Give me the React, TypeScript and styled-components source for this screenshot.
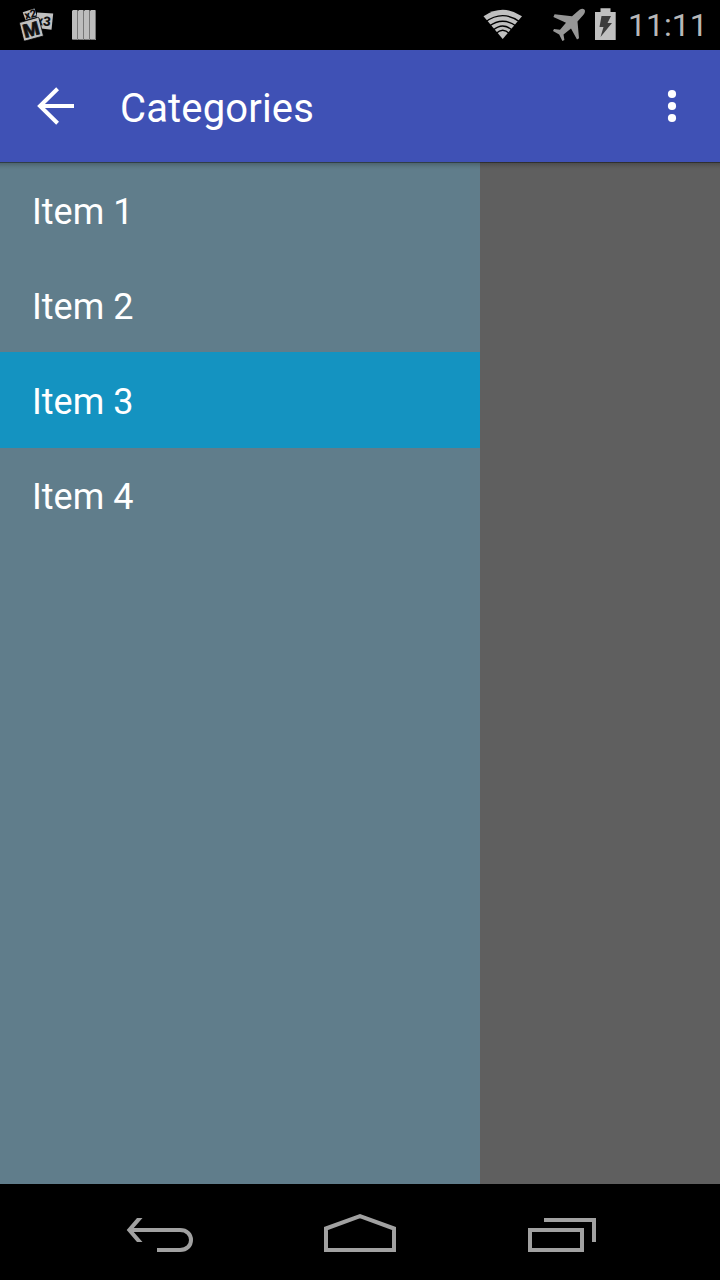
import React from "react";
import styled, { createGlobalStyle } from "styled-components";

const GlobalStyle = createGlobalStyle`
  * { box-sizing: border-box; }
  body { margin: 0; background: #000; }
`;

const Screen = styled.div`
  display: flex;
  flex-direction: column;
  width: 720px;
  height: 1280px;
  overflow: hidden;
  font-family: Roboto, sans-serif;
  background: #000;
`;

const StatusBar = styled.header`
  display: flex;
  justify-content: space-between;
  flex: 0 0 50px;
  height: 50px;
  padding: 0 13px 0 18px;
`;

const StatusGroup = styled.div`
  display: flex;
  align-items: flex-start;
`;

const StatusIcon = styled.svg<{ $gap?: number }>`
  display: block;
  flex: none;
  margin-right: ${({ $gap = 0 }) => $gap}px;
`;

const Clock = styled.time`
  width: 79px;
  height: 50px;
  line-height: 50px;
  font-size: 32px;
  font-weight: 400;
  color: #b8b8b8;
  white-space: nowrap;
`;

const AppBar = styled.div`
  display: flex;
  align-items: center;
  flex: 0 0 112px;
  padding: 0 24px 0 32px;
  background: #3f51b5;
`;

const IconButton = styled.button`
  display: block;
  width: 48px;
  height: 48px;
  padding: 0;
  border: 0;
  background: none;
  color: #fff;

  svg { display: block; }
`;

const Title = styled.h1`
  flex: 1;
  margin: 0;
  padding: 5px 0 0 40px;
  font-size: 40px;
  font-weight: 400;
  letter-spacing: 0.15px;
  line-height: 48px;
  color: #fff;
`;

const Content = styled.main`
  display: flex;
  flex: 1;
  position: relative;
  background: #5f5f5f;

  &::before {
    content: "";
    position: absolute;
    inset: 0 0 auto;
    height: 8px;
    background: linear-gradient(rgba(0, 0, 0, 0.5) 0 1px, rgba(0, 0, 0, 0.2) 1px, rgba(0, 0, 0, 0.05) 5px, transparent);
  }
`;

const Drawer = styled.nav`
  width: 480px;
  background: #607d8b;
`;

const DrawerItem = styled.div<{ $active: boolean }>`
  height: ${({ $active }) => ($active ? 96 : 95)}px;
  margin-bottom: ${({ $active }) => ($active ? -1 : 0)}px;
  padding: 1px 32px 0 32px;
  font-size: 36px;
  line-height: 98px;
  color: #fff;
  background: ${({ $active }) => ($active ? "#1493c1" : "transparent")};
`;

const NavigationBar = styled.footer`
  display: flex;
  justify-content: center;
  gap: 104px;
  flex: 0 0 96px;
`;

const NavButton = styled.button`
  width: 100px;
  height: 96px;
  padding: 0;
  border: 0;
  background: none;
  color: #a1a1a1;

  svg { display: block; }
`;

const items = ["Item 1", "Item 2", "Item 3", "Item 4"];

export default function App() {
  return (
    <Screen>
      <GlobalStyle />
      <StatusBar>
        <StatusGroup>
          <StatusIcon width="38" height="50" viewBox="18 0 38 50" $gap={15}>
            <g fontFamily="Roboto, sans-serif" fontWeight="900" fill="#111">
              <path d="M22.7 12.2 34.5 8.6 37 17 25.5 20Z" fill="#c0c0c0" />
              <text x="24.5" y="18.5" fontSize="11" transform="rotate(-14 29 15)">x2</text>
              <path d="M37 12.6 53.2 13.5 51.5 29.8 37 28Z" fill="#c0c0c0" />
              <text x="36.5" y="25.5" fontSize="13" transform="rotate(6 44 21)">x3</text>
              <path d="M20.5 22.3 37.6 17.4Q38.5 17.2 38.9 18L43.3 35.2Q43.5 36 42.6 36.2L25 41Q24 41.2 23.7 40.3L19.6 23.7Q19.4 22.6 20.5 22.3Z" fill="#c0c0c0" stroke="#000" strokeWidth=".8" />
              <text x="23" y="36" fontSize="18.5" stroke="#111" strokeWidth=".6" transform="rotate(-15 31.5 29.5)">M</text>
            </g>
          </StatusIcon>
          <StatusIcon width="26" height="50" viewBox="71 0 26 50">
            {[72, 78, 84, 90].map((x) => (
              <g key={x}>
                <path d={`M${x} 11 ${x + 1} 10H${x + 5}L${x + 6} 11V40H${x + 1}L${x} 39Z`} fill="#bdbdbd" />
                <path d={`M${x + 5.5} 11V39.5H${x + 1}`} fill="none" stroke="#777" />
              </g>
            ))}
          </StatusIcon>
        </StatusGroup>
        <StatusGroup>
          <StatusIcon width="40" height="50" viewBox="483 0 40 50" $gap={29}>
            <path d="M502.7 39 483.5 16.2Q502.7 3.3 522 16.2Z" fill="#c0c0c0" />
            <g fill="none" stroke="#000" strokeWidth="1.4">
              <path d="M485 22.2Q502.7 9 520.4 22.2" />
              <path d="M489 26.3Q502.7 16.3 516.4 26.3" />
              <path d="M493 30.3Q502.7 21.7 512.4 30.3" />
              <path d="M496 33.6Q502.7 26.8 509.4 33.6" />
            </g>
          </StatusIcon>
          <StatusIcon width="34" height="50" viewBox="552 0 34 50" $gap={8}>
            <path d="M585 11Q585 13 583.5 14.8L577.5 21.5 579 38.3 577 39.6 571 28.5 563.5 34.5 564.4 40 562.4 41 559.2 34.5 553 31 554 29 560 29.8 566 22.8 553.4 17 554.6 14.2 572 16.2 579.5 9.8Q582 8.3 584 9.2Q585 9.8 585 11Z" fill="#969696" />
          </StatusIcon>
          <StatusIcon width="22" height="50" viewBox="594 0 22 50" $gap={12}>
            <path d="M595 12H600.5V8.3H610.5V12H615.7V40H595Z" fill="#c0c0c0" />
            <path d="M601.5 16H611L607.5 23H612L600.5 37L603.5 27H599.5Z" fill="#3c3c3c" />
          </StatusIcon>
          <Clock>11:11</Clock>
        </StatusGroup>
      </StatusBar>

      <AppBar>
        <IconButton aria-label="Back">
          <svg width="48" height="48" viewBox="32 82 48 48" fill="none" stroke="currentColor" strokeWidth="4">
            <path d="M74 106H40M57.6 88.7 40 106 57.6 123.3" />
          </svg>
        </IconButton>
        <Title>Categories</Title>
        <IconButton aria-label="More options">
          <svg width="48" height="48" viewBox="648 82 48 48" fill="currentColor">
            <circle cx="672" cy="94" r="4.1" />
            <circle cx="672" cy="106" r="4.1" />
            <circle cx="672" cy="118" r="4.1" />
          </svg>
        </IconButton>
      </AppBar>

      <Content>
        <Drawer>
          {items.map((item, index) => (
            <DrawerItem key={item} $active={index === 2}>{item}</DrawerItem>
          ))}
        </Drawer>
      </Content>

      <NavigationBar>
        <NavButton aria-label="Back">
          <svg width="100" height="96" viewBox="106 1184 100 96" fill="none" stroke="currentColor" strokeWidth="4">
            <path d="M130 1230H180C187 1230 191 1234.5 191 1240S187 1250 180 1250H157" />
            <path d="M137 1218H142.5L132 1230 142.5 1242H137L126.7 1230Z" fill="currentColor" stroke="none" />
          </svg>
        </NavButton>
        <NavButton aria-label="Home">
          <svg width="100" height="96" viewBox="310 1184 100 96" fill="none" stroke="currentColor" strokeWidth="4">
            <path d="M326 1228.5 360 1216.2 394 1228.5V1250H326Z" />
          </svg>
        </NavButton>
        <NavButton aria-label="Recent apps">
          <svg width="100" height="96" viewBox="514 1184 100 96" fill="none" stroke="currentColor" strokeWidth="4">
            <path d="M530 1230H582V1250H530ZM544 1220H594V1242" />
          </svg>
        </NavButton>
      </NavigationBar>
    </Screen>
  );
}
